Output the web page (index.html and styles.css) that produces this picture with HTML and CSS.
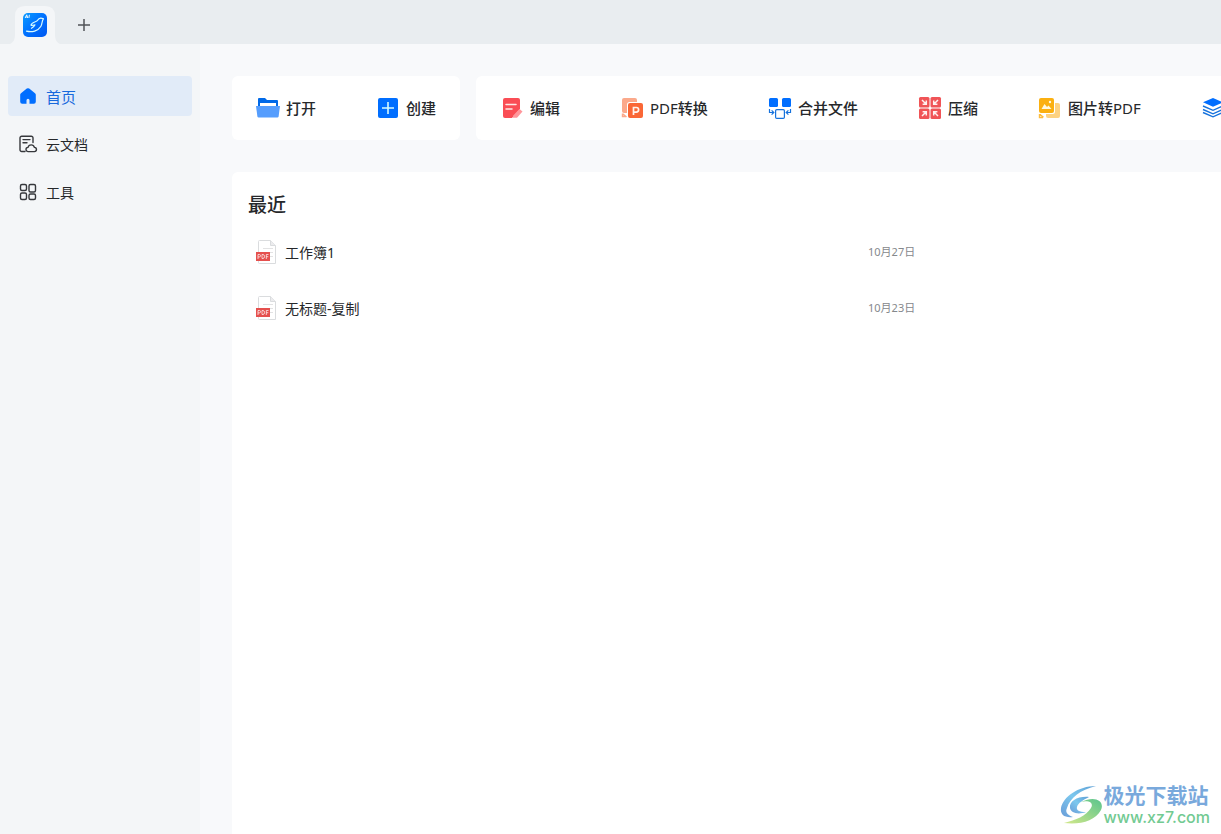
FILE: index.html
```html
<!DOCTYPE html>
<html lang="zh-CN">
<head>
<meta charset="utf-8">
<meta name="viewport" content="width=device-width, initial-scale=1">
<title>首页</title>
<link rel="stylesheet" href="styles.css">
</head>
<body>
<header class="tabbar">
  <button class="tab" aria-label="首页">
    <svg class="tab-shape" viewBox="0 0 50 38" aria-hidden="true"><path fill="#f4f6f8" d="M0 38C4 36 5 33 5 28V10Q5 0 15 0H35Q45 0 45 10V28C45 33 46 36 50 38Z"/></svg>
    <svg class="logo" viewBox="0 0 24 24" aria-hidden="true">
      <defs><linearGradient id="lg" x1="0" y1="0" x2="1" y2="1"><stop offset="0" stop-color="#0a9cff"/><stop offset=".5" stop-color="#0070ff"/><stop offset="1" stop-color="#0058f0"/></linearGradient></defs>
      <rect width="24" height="24" rx="5" fill="url(#lg)"/>
      <path d="M2.200 5 3.700 1.800 4.700 5M2.800 4h1.800M6.400 1.800 5.900 5" fill="none" stroke="#fff" stroke-width=".9"/>
      <path d="M3.500 18.200C9 19.600 15 18 17.800 13.500 19.500 10.800 18.600 8.300 20.500 5.700 18 4.600 15.500 5.300 14.600 7.200 13.600 9.300 8.500 9 8 12.200 9.500 12.700 11 12 12 11.800 11.200 13.500 10.300 14.400 8.500 15.300" fill="none" stroke="#d8fbff" stroke-width="1.200" stroke-linecap="round" stroke-linejoin="round"/>
    </svg>
  </button>
  <button class="add" aria-label="新建标签页"><svg viewBox="0 0 14 14" aria-hidden="true"><path d="M7 1v12M1 7h12" stroke="#505357" stroke-width="1.500"/></svg></button>
</header>
<div class="layout">
  <nav class="sidebar">
    <a class="nav active" href="#home"><svg viewBox="0 0 20 20" aria-hidden="true"><path fill="#006eff" d="M8.800 2.600a2 2 0 0 1 2.400 0L17 7.200a2 2 0 0 1 .8 1.600v7a2 2 0 0 1-2 2h-4.300v-3.500a1.500 1.500 0 0 0-3 0v3.500H4.200a2 2 0 0 1-2-2v-7A2 2 0 0 1 3 7.200Z"/></svg>首页</a>
    <a class="nav" href="#cloud"><svg viewBox="0 0 20 20" aria-hidden="true"><g fill="none" stroke="#36383c" stroke-width="1.400" stroke-linecap="round" stroke-linejoin="round"><path d="M7 17.500H3.700a1.700 1.700 0 0 1-1.700-1.700V4a1.700 1.700 0 0 1 1.700-1.700h9.600A1.700 1.700 0 0 1 15 4v4.500M5 5.600h7M5 8.800h4"/><path d="M10.200 17.600a2.100 2.100 0 0 1-.2-4.200 3.300 3.300 0 0 1 6.400 0 2.100 2.100 0 0 1-.1 4.200Z"/></g></svg>云文档</a>
    <a class="nav" href="#tools"><svg viewBox="0 0 20 20" aria-hidden="true"><g fill="none" stroke="#36383c" stroke-width="1.400"><rect x="2.500" y="2.500" width="6" height="6" rx="1.500"/><rect x="11" y="2.500" width="6.500" height="7.500" rx="1.500"/><rect x="2.500" y="11" width="6" height="6.500" rx="1.500"/><rect x="11" y="12" width="6.500" height="5.500" rx="1.500"/></g></svg>工具</a>
  </nav>
  <main class="main">
    <div class="toolbars">
      <div class="tools">
        <button class="tool"><svg viewBox="0 0 24 24" aria-hidden="true"><path fill="#0069e8" d="M2 3q0-1 1-1h6l2 2h10q1 0 1 1v7H2Z"/><path fill="#fff" d="M4 7h16v5H4Z"/><path fill="#559dfd" d="M0 10h24l-1.400 10.500q-.2 1-1.200 1H2.600q-1 0-1.200-1Z"/></svg><span class="label">打开</span></button>
        <button class="tool"><svg viewBox="0 0 24 24" aria-hidden="true"><rect x="2" y="2" width="20" height="20" rx="2" fill="#006eff"/><path d="M12 6v12M6 12h12" stroke="#d5fbff" stroke-width="1.600"/></svg><span class="label">创建</span></button>
      </div>
      <div class="tools wide">
        <button class="tool"><svg viewBox="0 0 24 24" aria-hidden="true"><path fill="#fa4d55" d="M5 2h13q2 0 2 2v9l-8 9H5q-2 0-2-2V4q0-2 2-2Z"/><path d="M6 8.500h10M6 13h6" stroke="#ffe9e5" stroke-width="1.500" stroke-linecap="round"/><path fill="#ff969b" d="m19.500 13 3 2.500-5.500 6.300H13v-2Z"/></svg><span class="label">编辑</span></button>
        <button class="tool"><svg viewBox="0 0 24 24" aria-hidden="true"><rect x="2" y="2" width="15" height="15" rx="2" fill="#fba98b"/><path d="M2.500 17.500v3h3M3 18l3.500 3" fill="none" stroke="#fba98b" stroke-width="1.400"/><rect x="7" y="6" width="17" height="17" rx="2.500" fill="#fff"/><rect x="8" y="7" width="15" height="15" rx="2" fill="#fa6736"/><path d="M13.500 19v-7.500h2.800a2.300 2.300 0 0 1 0 4.600h-2.800" fill="none" stroke="#fff3ed" stroke-width="1.700"/></svg><span class="label"><span class="latin">PDF</span>转换</span></button>
        <button class="tool"><svg viewBox="0 0 24 24" aria-hidden="true"><g fill="#006eff"><rect x="1" y="2" width="9" height="9" rx="1.500"/><rect x="14" y="2" width="9" height="9" rx="1.500"/></g><g fill="none" stroke="#1672dd" stroke-width="1.200"><rect x="7.600" y="13.600" width="8.800" height="8.800" rx="1.200"/><path d="M1.500 13v3.500h4M3.600 14.300l2.200 2.200-2.200 2.200M22.500 13v3.500h-4M20.400 14.300l-2.200 2.200 2.200 2.200"/></g></svg><span class="label">合并文件</span></button>
        <button class="tool"><svg viewBox="0 0 24 24" aria-hidden="true"><g fill="#f05457"><rect x="1" y="1" width="10.500" height="10.500" rx="1.500"/><rect x="12.500" y="1" width="10.500" height="10.500" rx="1.500"/><rect x="1" y="12.500" width="10.500" height="10.500" rx="1.500"/><rect x="12.500" y="12.500" width="10.500" height="10.500" rx="1.500"/></g><path d="m4 4 4 4M8.300 4.600v3.700H4.600M20 4l-4 4M15.700 4.600v3.700h3.700M4 20l4-4M8.300 19.400v-3.700H4.600M20 20l-4-4M15.700 19.400v-3.700h3.700" fill="none" stroke="#fff0ef" stroke-width="1.500"/></svg><span class="label">压缩</span></button>
        <button class="tool"><svg viewBox="0 0 24 24" aria-hidden="true"><rect x="8" y="7" width="14" height="15" rx="2" fill="#fdd281"/><path d="M1.500 18v3.500H5M2 18.500l3.500 2.800" fill="none" stroke="#fdbc3d" stroke-width="1.400"/><rect x="0" y="1" width="17" height="17" rx="2.500" fill="#fff"/><rect x="1" y="2" width="15" height="15" rx="2" fill="#fbb011"/><path d="m3.500 13 3-5 2.500 3 1.500-1.500L13.500 13Z" fill="#fff8df"/><circle cx="12" cy="6" r="1.200" fill="#fff8df"/></svg><span class="label">图片转<span class="latin">PDF</span></span></button>
        <button class="tool" aria-label="批量处理"><svg viewBox="0 0 24 24" aria-hidden="true"><path fill="#006eff" d="m12 2 10 4.300-10 4.400L2 6.300Z"/><path d="m2 10 10 4.300L22 10M2 13.500l10 4.300 10-4.300M2 16.500l10 4.300 10-4.300" fill="none" stroke="#1672dd" stroke-width="1.400"/></svg></button>
      </div>
    </div>
    <section class="recent">
      <h1 class="title">最近</h1>
      <table class="files">
        <tr><td class="name"><a class="file" href="#f1"><svg class="pdf" viewBox="0 0 24 24" aria-hidden="true"><path d="M3.500.5h11l5 5v18h-16q-1 0-1-1v-21q0-1 1-1Z" fill="#fff" stroke="#dadcde"/><path d="M14.500.5v5h5" fill="#ececee" stroke="#dadcde"/><path d="M7 8.500h10M14 12.500h3M14 16.500h3" stroke="#e2e2e3"/><rect y="12" width="14" height="9" fill="#e5504e"/><path d="M2 19v-4.500h1.500q1 0 1 1.200t-1 1.200H2M6 14.500v4h1q1.500 0 1.500-2t-1.500-2ZM10.300 19v-4.500h2.200M10.300 16.700h2" fill="none" stroke="#fff" stroke-width=".7"/></svg>工作簿1</a></td><td class="date">10月27日</td></tr>
        <tr><td class="name"><a class="file" href="#f2"><svg class="pdf" viewBox="0 0 24 24" aria-hidden="true"><path d="M3.500.5h11l5 5v18h-16q-1 0-1-1v-21q0-1 1-1Z" fill="#fff" stroke="#dadcde"/><path d="M14.500.5v5h5" fill="#ececee" stroke="#dadcde"/><path d="M7 8.500h10M14 12.500h3M14 16.500h3" stroke="#e2e2e3"/><rect y="12" width="14" height="9" fill="#e5504e"/><path d="M2 19v-4.500h1.500q1 0 1 1.200t-1 1.200H2M6 14.500v4h1q1.500 0 1.500-2t-1.500-2ZM10.300 19v-4.500h2.200M10.300 16.700h2" fill="none" stroke="#fff" stroke-width=".7"/></svg>无标题-复制</a></td><td class="date">10月23日</td></tr>
      </table>
    </section>
  </main>
</div>
<div class="watermark">
  <svg viewBox="0 0 44 42" aria-hidden="true">
    <defs><linearGradient id="wb" x1="1" y1="0" x2="0" y2="1"><stop offset="0" stop-color="#5fa0d6"/><stop offset=".5" stop-color="#7cc8ee"/><stop offset="1" stop-color="#6a9cd8"/></linearGradient><linearGradient id="wg" x1="1" y1="0" x2="0" y2="1"><stop offset="0" stop-color="#5ac48d"/><stop offset="1" stop-color="#d3e88a"/></linearGradient></defs>
    <path fill="url(#wb)" d="M36 2C18 2 3 13 1 24c-1 7 4 10 12 9C7 31 5 28 7 24 10 14 20 6 36 2Z"/>
    <path fill="url(#wb)" d="M29 13C18 12 9 17 10 24c1 5 8 7 16 4-7 0-10-2-9-5 1-4 6-7 12-10Z"/>
    <path fill="url(#wg)" d="M21 18c8-2 13 1 10 6C26 32 16 36 4 39c16 2 31-2 37-13 4-9-6-15-20-8Z"/>
  </svg>
  <div class="wm-text"><span class="wm-name">极光下载站</span><span class="wm-url">www.xz7.com</span></div>
</div>
</body>
</html>
```
FILE: styles.css
```css
* { box-sizing: border-box; }
body {
  margin: 0;
  min-height: 100vh;
  display: flex;
  flex-direction: column;
  position: relative;
  overflow: hidden;
  background: #f8f9fb;
  color: #26282b;
  font-family: "Noto Sans", "Noto Sans CJK SC", sans-serif;
}
button { border: 0; padding: 0; background: none; font: inherit; color: inherit; }
a { color: inherit; text-decoration: none; }
svg { display: block; flex: none; }
.tabbar {
  display: flex;
  align-items: flex-end;
  height: 44px;
  padding-left: 10px;
  background: #e9edf0;
}
.tab { display: grid; place-items: center; height: 38px; }
.tab > * { grid-area: 1 / 1; }
.tab-shape { width: 50px; height: 38px; }
.logo { width: 24px; height: 24px; }
.add { margin: 0 0 12px 17px; }
.add svg { width: 14px; height: 14px; }
.layout { display: flex; flex: 1; }
.sidebar {
  display: flex;
  flex-direction: column;
  gap: 8px;
  width: 200px;
  flex: none;
  padding: 32px 8px;
  background: #f4f6f8;
}
.nav {
  display: flex;
  align-items: center;
  gap: 8px;
  height: 40px;
  padding-left: 10px;
  border-radius: 4px;
  font-size: 14px;
}
.nav svg { width: 20px; height: 20px; }
.active { background: #e1ebf8; color: #1769dd; font-size: 15px; }
.main {
  display: flex;
  flex-direction: column;
  gap: 32px;
  flex: 1;
  min-width: 0;
  padding: 32px 0 0 32px;
}
.toolbars { display: flex; gap: 16px; }
.tools {
  display: flex;
  gap: 60px;
  height: 64px;
  flex: none;
  padding: 0 24px;
  border-radius: 6px;
  background: #fff;
}
.wide { flex: 1; min-width: 0; padding-right: 0; overflow: hidden; border-radius: 6px 0 0 6px; }
.tool {
  display: flex;
  align-items: center;
  gap: 6px;
  flex: none;
  font-size: 15px;
  font-weight: 500;
  white-space: nowrap;
}
.tool svg { width: 24px; height: 24px; }
.label { padding-bottom: 2px; }
.latin { font-weight: 400; }
.recent { flex: 1; padding: 16px 0 0 16px; border-radius: 6px 0 0 0; background: #fff; }
.title { margin: 0; font-size: 19px; line-height: 34px; font-weight: 500; }
.files { width: 100%; margin-top: 2px; border-collapse: collapse; table-layout: fixed; }
.files td { height: 56px; padding: 0; }
.files .name { width: 620px; }
.file { display: flex; align-items: center; gap: 5px; padding-left: 8px; font-size: 14px; }
.pdf { width: 24px; height: 24px; }
.files .date { padding-bottom: 2px; color: #85888c; font-size: 11px; }
.watermark { position: absolute; right: 11px; bottom: 7px; display: flex; align-items: center; }
.watermark svg { width: 44px; height: 42px; }
.wm-text { display: flex; flex-direction: column; white-space: nowrap; }
.wm-name { color: #79a9dc; font-size: 21px; line-height: 24px; font-weight: 700; }
.wm-url { color: #72ca92; font-family: Inter, sans-serif; font-size: 16px; line-height: 20px; font-weight: 500; }
```
